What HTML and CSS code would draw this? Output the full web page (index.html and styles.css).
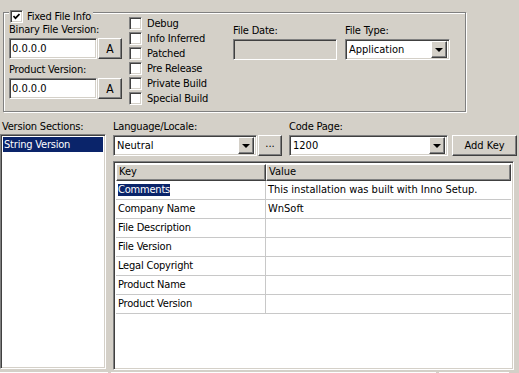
FILE: index.html
```html
<!DOCTYPE html>
<html lang="en">
<head>
  <meta charset="UTF-8">
  <title>Version Info</title>
  <link rel="stylesheet" href="styles.css">
</head>
<body>
  <div class="window">
    <!-- Fixed file info group -->
    <div class="group">
      <div class="legend">
        <span class="check checked">
          <svg width="7" height="7" viewBox="0 0 7 7"><polyline points="0.5,3 2.5,5.2 6.5,1" fill="none" stroke="#000" stroke-width="1.7"/></svg>
        </span>
        <span>Fixed File Info</span>
      </div>
      <div class="group-body">
        <div class="col-version">
          <div class="label">Binary File Version:</div>
          <div class="field-row">
            <div class="edit version-edit">0.0.0.0</div>
            <div class="btn btn-a">A</div>
          </div>
          <div class="label label-gap">Product Version:</div>
          <div class="field-row">
            <div class="edit version-edit">0.0.0.0</div>
            <div class="btn btn-a">A</div>
          </div>
        </div>
        <div class="col-flags">
          <div class="flag"><span class="check"></span>Debug</div>
          <div class="flag"><span class="check"></span>Info Inferred</div>
          <div class="flag"><span class="check"></span>Patched</div>
          <div class="flag"><span class="check"></span>Pre Release</div>
          <div class="flag"><span class="check"></span>Private Build</div>
          <div class="flag"><span class="check"></span>Special Build</div>
        </div>
        <div class="col-date">
          <div class="label">File Date:</div>
          <div class="edit date-edit disabled"></div>
        </div>
        <div class="col-type">
          <div class="label">File Type:</div>
          <div class="combo type-combo">
            <span class="combo-text">Application</span>
            <span class="drop"><span class="arrow"></span></span>
          </div>
        </div>
      </div>
    </div>

    <!-- Lower part -->
    <div class="lower">
      <div class="sections">
        <div class="label">Version Sections:</div>
        <div class="list">
          <div class="list-item selected">String Version</div>
        </div>
      </div>

      <div class="strings">
        <div class="toolbar">
          <div class="tool">
            <div class="label">Language/Locale:</div>
            <div class="tool-row">
              <div class="combo lang-combo">
                <span class="combo-text">Neutral</span>
                <span class="drop"><span class="arrow"></span></span>
              </div>
              <div class="btn btn-dots">...</div>
            </div>
          </div>
          <div class="tool">
            <div class="label">Code Page:</div>
            <div class="combo code-combo">
              <span class="combo-text">1200</span>
              <span class="drop"><span class="arrow"></span></span>
            </div>
          </div>
          <div class="btn btn-add">Add Key</div>
        </div>

        <div class="grid">
          <div class="grid-head">
            <div class="head-cell key-col">Key</div>
            <div class="head-cell value-col">Value</div>
          </div>
          <div class="grid-row">
            <div class="cell key-col"><span class="hl">Comments</span></div>
            <div class="cell value-col">This installation was built with Inno Setup.</div>
          </div>
          <div class="grid-row">
            <div class="cell key-col">Company Name</div>
            <div class="cell value-col">WnSoft</div>
          </div>
          <div class="grid-row">
            <div class="cell key-col">File Description</div>
            <div class="cell value-col"></div>
          </div>
          <div class="grid-row">
            <div class="cell key-col">File Version</div>
            <div class="cell value-col"></div>
          </div>
          <div class="grid-row">
            <div class="cell key-col">Legal Copyright</div>
            <div class="cell value-col"></div>
          </div>
          <div class="grid-row">
            <div class="cell key-col">Product Name</div>
            <div class="cell value-col"></div>
          </div>
          <div class="grid-row">
            <div class="cell key-col">Product Version</div>
            <div class="cell value-col"></div>
          </div>
        </div>
      </div>
    </div>

    <!-- Tops of the controls below -->
    <div class="footer">
      <div class="foot-part foot-left"></div>
      <div class="foot-part foot-mid"></div>
      <div class="foot-part foot-right"></div>
    </div>
  </div>
</body>
</html>
```

FILE: styles.css
```css
/* Reset */
* {
  margin: 0;
  padding: 0;
  box-sizing: border-box;
}

body {
  width: 519px;
  height: 373px;
  overflow: hidden;
  background: #d4d0c8;
  color: #000;
  font-family: "DejaVu Sans Condensed", "Liberation Sans", Arial, sans-serif;
  font-size: 11px;
}

.label {
  height: 13px;
  line-height: 13px;
  white-space: nowrap;
  letter-spacing: -0.2px;
}

/* Classic 3D borders */
.edit,
.combo,
.list,
.grid {
  background: #fff;
  border: 1px solid;
  border-color: #808080 #fff #fff #808080;
  box-shadow: inset 1px 1px 0 #404040, inset -1px -1px 0 #d4d0c8;
}

.btn,
.drop,
.head-cell {
  background: #d4d0c8;
  border: 1px solid;
  border-color: #fff #404040 #404040 #fff;
  box-shadow: inset -1px -1px 0 #808080;
}

.btn {
  display: flex;
  align-items: center;
  justify-content: center;
}

/* Group box */
.group {
  position: relative;
  margin: 12px 0 0 3px;
  width: 463px;
  height: 100px;
  border: 1px solid #808080;
  box-shadow: inset 1px 1px 0 #fff, 1px 1px 0 #fff;
}

.legend {
  position: absolute;
  top: -3px;
  left: 5px;
  display: flex;
  align-items: center;
  gap: 4px;
  padding: 0 2px 0 1px;
  height: 13px;
  background: #d4d0c8;
  letter-spacing: -0.2px;
}

.group-body {
  display: flex;
  align-items: flex-start;
}

.col-version {
  padding: 10px 0 0 5px;
}

.label-gap {
  margin-top: 4px;
}

.field-row {
  display: flex;
  gap: 1px;
  margin-top: 2px;
  height: 21px;
}

.version-edit {
  width: 88px;
}

.edit {
  padding: 3px 0 0 2px;
  white-space: nowrap;
}

.edit.disabled {
  background: #d4d0c8;
}

.btn-a {
  width: 24px;
  font-size: 12px;
}

/* Check boxes */
.check {
  width: 13px;
  height: 13px;
  flex: none;
  display: flex;
  align-items: center;
  justify-content: center;
  background: #fff;
  border: 1px solid;
  border-color: #808080 #fff #fff #808080;
  box-shadow: inset 1px 1px 0 #404040, inset -1px -1px 0 #d4d0c8;
}

.col-flags {
  width: 104px;
  margin-left: 7px;
  padding-top: 3px;
}

.flag {
  display: flex;
  align-items: center;
  gap: 5px;
  height: 15px;
  white-space: nowrap;
  letter-spacing: -0.2px;
}

.col-date {
  padding-top: 11px;
}

.col-date .edit {
  margin-top: 2px;
}

.date-edit {
  width: 104px;
  height: 21px;
}

.col-type {
  margin-left: 8px;
  padding-top: 11px;
}

.col-type .combo {
  margin-top: 2px;
}

/* Combo boxes */
.combo {
  display: flex;
  align-items: center;
  height: 21px;
  padding: 2px;
}

.combo-text {
  flex: 1;
  padding-left: 1px;
  white-space: nowrap;
}

.drop {
  width: 16px;
  height: 17px;
  display: flex;
  align-items: center;
  justify-content: center;
}

.arrow {
  width: 0;
  height: 0;
  border-left: 4px solid transparent;
  border-right: 4px solid transparent;
  border-top: 4px solid #000;
}

.type-combo {
  width: 105px;
}

/* Lower area */
.lower {
  display: flex;
  gap: 7px;
  margin-top: 8px;
}

.sections .label {
  padding-left: 2px;
}

.list {
  width: 106px;
  height: 235px;
  margin-top: 1px;
  padding: 2px;
}

.list-item {
  height: 15px;
  line-height: 15px;
  padding-left: 1px;
  white-space: nowrap;
  letter-spacing: -0.2px;
}

.list-item.selected {
  background: #0a246a;
  color: #fff;
}

.strings {
  width: 404px;
}

.toolbar {
  display: flex;
  align-items: flex-end;
}

.tool .combo {
  margin-top: 2px;
}

.tool-row {
  display: flex;
  align-items: flex-end;
  gap: 1px;
}

.lang-combo {
  width: 144px;
}

.btn-dots {
  width: 24px;
  height: 21px;
  padding-bottom: 4px;
}

.tool + .tool {
  margin-left: 7px;
}

.code-combo {
  width: 159px;
}

.btn-add {
  width: 65px;
  height: 21px;
  margin-left: 4px;
}

/* Key / value grid */
.grid {
  width: 401px;
  height: 209px;
  margin-top: 5px;
  padding: 2px;
}

.grid-head,
.grid-row {
  display: flex;
}

.grid-head {
  height: 17px;
}

.head-cell {
  line-height: 14px;
  padding-left: 2px;
}

.key-col {
  width: 150px;
  flex: none;
}

.value-col {
  flex: 1;
}

.grid-row {
  height: 19px;
  border-bottom: 1px solid #c8c8c8;
}

.cell {
  line-height: 18px;
  padding-left: 2px;
  white-space: nowrap;
}

.cell.key-col {
  border-right: 1px solid #c8c8c8;
  letter-spacing: -0.2px;
}

.hl {
  display: inline-block;
  line-height: 12px;
  background: #0a246a;
  color: #fff;
}

/* Tops of controls below the visible area */
.footer {
  display: flex;
  gap: 3px;
  margin-top: 2px;
}

.foot-part {
  height: 4px;
  border-top: 1px solid #fff;
  border-left: 1px solid #fff;
}

.foot-left {
  width: 108px;
}

.foot-mid {
  width: 325px;
}

.foot-right {
  width: 70px;
}
```
